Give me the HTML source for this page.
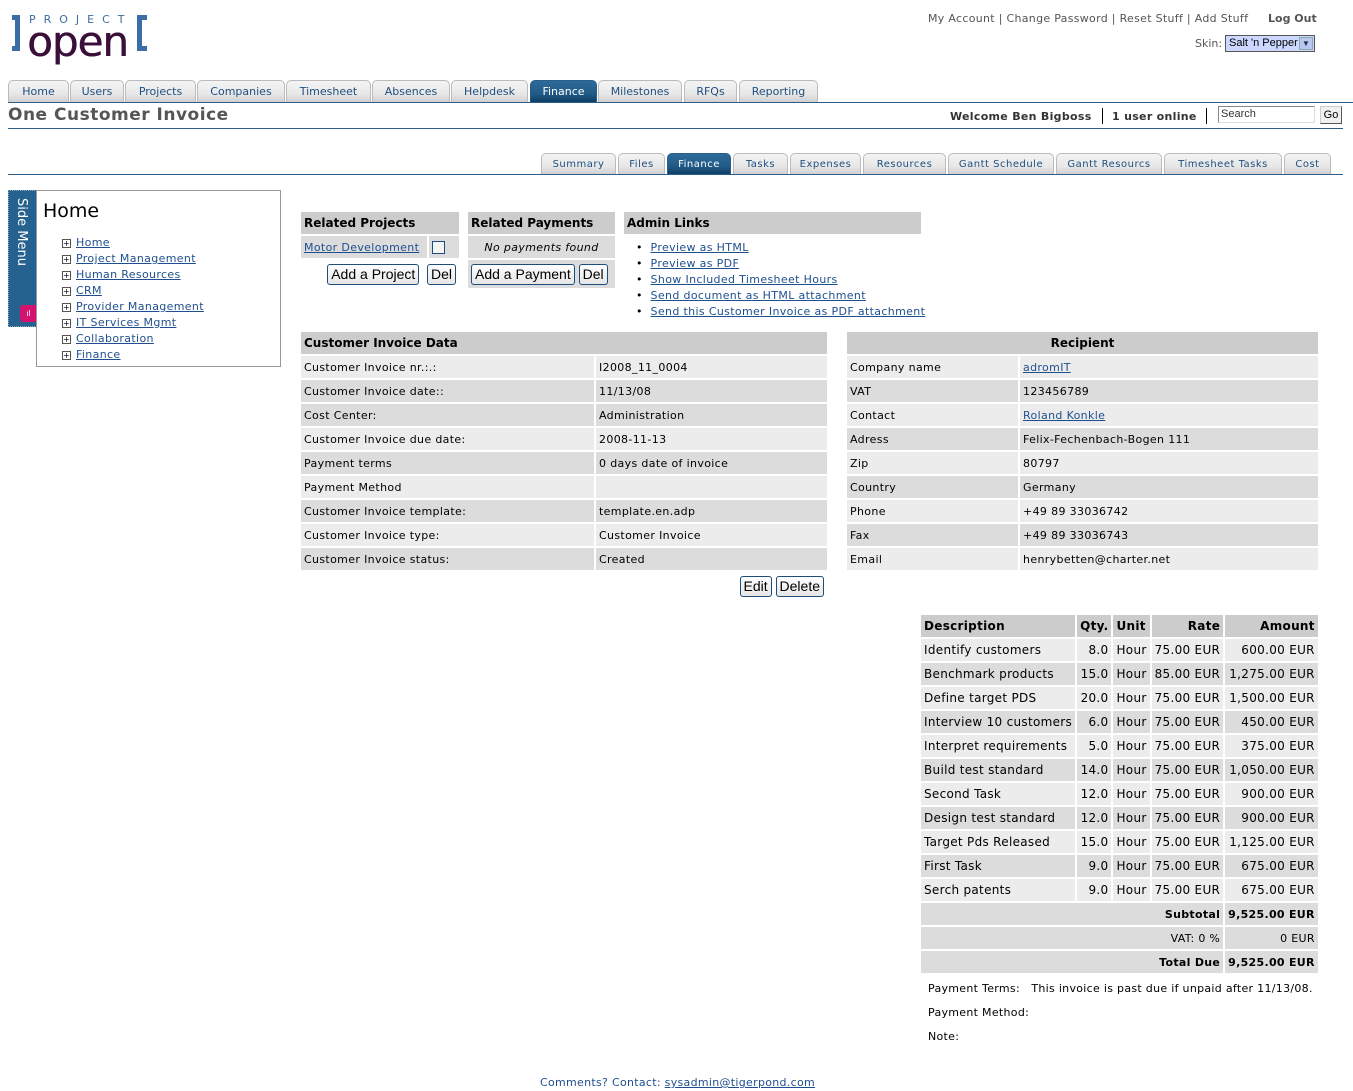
<!DOCTYPE html>
<html><head><meta charset="utf-8"><style>
*{box-sizing:border-box}
body{margin:0;width:1353px;height:1091px;position:relative;font-family:"DejaVu Sans","Liberation Sans",sans-serif;font-size:11px;color:#000;background:#fff;overflow:hidden}
.a{position:absolute}
a{color:#1f4f8f;text-decoration:underline}
.tab{position:absolute;height:22px;border:1px solid #bbb;border-bottom:none;border-radius:5px 5px 0 0;background:linear-gradient(#f4f4f4,#e8e8e8 60%,#d0d0d0);color:#1f4f7f;text-align:center;line-height:22px;font-size:11px}
.tab.on{background:linear-gradient(#2d6b9a,#225b88 60%,#0f3d66);color:#fff;border-color:#2a5d8a}
.stab{position:absolute;height:21px;border:1px solid #bbb;border-bottom:none;border-radius:5px 5px 0 0;background:linear-gradient(#f4f4f4,#e8e8e8 60%,#d0d0d0);color:#1f4f7f;text-align:center;line-height:22px;font-size:10px;letter-spacing:.5px}
.stab.on{background:linear-gradient(#2d6b9a,#225b88 60%,#0f3d66);color:#fff;border-color:#2a5d8a}
table{border-collapse:separate;border-spacing:2px;position:absolute}
td{padding:0 3px;height:22px;font-size:11px;white-space:nowrap;letter-spacing:.35px}
.h td{background:#ccc;font-weight:bold;font-size:12px;height:22px;letter-spacing:0}
.l td{background:#ececec}
.d td{background:#dcdcdc}
.r{text-align:right}
.btn{display:inline-block;border:1px solid #1d4d7a;border-radius:3px;background:linear-gradient(#fff,#e6e6e6);font-family:"Liberation Sans",sans-serif;font-size:14px;padding:0 3px;height:21px;line-height:19px;letter-spacing:0}
.it td{font-size:12px;height:22px;letter-spacing:.3px}
.lk{letter-spacing:.35px}
</style></head><body>
<!-- logo -->
<div class="a" style="left:12px;top:15px;width:8px;height:36px;border:5px solid #3a6ea5;border-left:none;"></div>
<div class="a" style="left:29px;top:13px;font-size:11px;letter-spacing:8px;color:#3a6ea5">PROJECT</div>
<div class="a" style="left:27px;top:17px;font-size:42px;color:#3a0f3a;letter-spacing:-1px;font-family:'DejaVu Sans',sans-serif;text-shadow:0.6px 0 0 #3a0f3a">open</div>
<div class="a" style="left:137px;top:15px;width:10px;height:36px;border:5px solid #3a6ea5;border-right:none;"></div>

<div class="a" style="left:928px;top:12px;color:#555;font-size:11px;letter-spacing:.3px">My Account | Change Password | Reset Stuff | Add Stuff</div>
<div class="a" style="left:1268px;top:12px;color:#555;font-size:11px;font-weight:bold">Log Out</div>
<div class="a" style="left:1195px;top:37px;color:#555;font-size:11px">Skin:</div>
<div class="a" style="left:1225px;top:35px;width:90px;height:17px;border:1px solid #555;background:#ccd8ff;font-family:'Liberation Sans',sans-serif;font-size:11px;padding-left:3px;line-height:15px">Salt 'n Pepper<span style="position:absolute;right:1px;top:1px;width:14px;height:13px;background:#b8c8f0;border:1px solid #8aa;font-size:8px;text-align:center;line-height:12px;color:#234">&#9660;</span></div>

<!-- main tabs -->
<div class="tab" style="left:8px;top:80px;width:61px">Home</div>
<div class="tab" style="left:70px;top:80px;width:54px">Users</div>
<div class="tab" style="left:125px;top:80px;width:71px">Projects</div>
<div class="tab" style="left:197px;top:80px;width:88px">Companies</div>
<div class="tab" style="left:286px;top:80px;width:85px">Timesheet</div>
<div class="tab" style="left:372px;top:80px;width:78px">Absences</div>
<div class="tab" style="left:451px;top:80px;width:77px">Helpdesk</div>
<div class="tab on" style="left:530px;top:80px;width:67px">Finance</div>
<div class="tab" style="left:598px;top:80px;width:84px">Milestones</div>
<div class="tab" style="left:684px;top:80px;width:53px">RFQs</div>
<div class="tab" style="left:739px;top:80px;width:79px">Reporting</div>
<div class="a" style="left:8px;top:102px;width:1345px;height:1px;background:#2a5d8a"></div>
<div class="a" style="left:8px;top:105px;font-size:17px;font-weight:bold;color:#555;letter-spacing:.5px">One Customer Invoice</div>
<div class="a" style="left:950px;top:110px;font-size:11px;font-weight:bold;color:#333;letter-spacing:.3px">Welcome Ben Bigboss</div>
<div class="a" style="left:1102px;top:108px;width:1px;height:16px;background:#000"></div>
<div class="a" style="left:1112px;top:110px;font-size:11px;font-weight:bold;color:#333;letter-spacing:.3px">1 user online</div>
<div class="a" style="left:1206px;top:108px;width:1px;height:16px;background:#000"></div>
<div class="a" style="left:1218px;top:106px;width:97px;height:17px;border:1px solid #888;border-right-color:#ddd;border-bottom-color:#ddd;font-family:'Liberation Sans',sans-serif;font-size:11px;padding-left:2px;line-height:14px;color:#333">Search</div>
<div class="a" style="left:1320px;top:106px;width:22px;height:18px;border:1px solid #ccc;border-right-color:#555;border-bottom-color:#555;background:#f0f0f0;font-family:'Liberation Sans',sans-serif;font-size:11px;text-align:center;line-height:16px">Go</div>
<div class="a" style="left:8px;top:128px;width:1335px;height:1px;background:#2a5d8a"></div>

<!-- sub tabs -->
<div class="stab" style="left:541px;top:153px;width:75px">Summary</div>
<div class="stab" style="left:618px;top:153px;width:47px">Files</div>
<div class="stab on" style="left:667px;top:153px;width:64px">Finance</div>
<div class="stab" style="left:733px;top:153px;width:55px">Tasks</div>
<div class="stab" style="left:790px;top:153px;width:71px">Expenses</div>
<div class="stab" style="left:863px;top:153px;width:83px">Resources</div>
<div class="stab" style="left:948px;top:153px;width:106px">Gantt Schedule</div>
<div class="stab" style="left:1056px;top:153px;width:106px">Gantt Resourcs</div>
<div class="stab" style="left:1164px;top:153px;width:118px">Timesheet Tasks</div>
<div class="stab" style="left:1284px;top:153px;width:47px">Cost</div>
<div class="a" style="left:8px;top:174px;width:1335px;height:1px;background:#2a5d8a"></div>

<!-- side menu -->
<div class="a" style="left:8px;top:190px;width:29px;height:137px;background:#26628f;border:1px dotted #8ab"></div>
<div class="a" style="left:14px;top:198px;color:#fff;font-size:13px;writing-mode:vertical-rl">Side Menu</div>
<div class="a" style="left:20px;top:305px;width:17px;height:17px;background:#d4136f;border-radius:3px 0 0 3px;color:#fff;font-size:8px;line-height:17px;text-align:center">ıl</div>
<div class="a" style="left:36px;top:190px;width:245px;height:177px;border:1px solid #999;background:#fff"></div>
<div class="a" style="left:43px;top:200px;font-size:19px">Home</div>
<div class="a lk" style="left:62px;top:235px;line-height:16px;font-size:11px">
<div><span style="display:inline-block;width:9px;height:9px;border:1px solid #555;font-size:8px;line-height:7px;text-align:center;margin-right:5px">+</span><a>Home</a></div>
<div><span style="display:inline-block;width:9px;height:9px;border:1px solid #555;font-size:8px;line-height:7px;text-align:center;margin-right:5px">+</span><a>Project Management</a></div>
<div><span style="display:inline-block;width:9px;height:9px;border:1px solid #555;font-size:8px;line-height:7px;text-align:center;margin-right:5px">+</span><a>Human Resources</a></div>
<div><span style="display:inline-block;width:9px;height:9px;border:1px solid #555;font-size:8px;line-height:7px;text-align:center;margin-right:5px">+</span><a>CRM</a></div>
<div><span style="display:inline-block;width:9px;height:9px;border:1px solid #555;font-size:8px;line-height:7px;text-align:center;margin-right:5px">+</span><a>Provider Management</a></div>
<div><span style="display:inline-block;width:9px;height:9px;border:1px solid #555;font-size:8px;line-height:7px;text-align:center;margin-right:5px">+</span><a>IT Services Mgmt</a></div>
<div><span style="display:inline-block;width:9px;height:9px;border:1px solid #555;font-size:8px;line-height:7px;text-align:center;margin-right:5px">+</span><a>Collaboration</a></div>
<div><span style="display:inline-block;width:9px;height:9px;border:1px solid #555;font-size:8px;line-height:7px;text-align:center;margin-right:5px">+</span><a>Finance</a></div>
</div>

<!-- related projects -->
<table style="left:299px;top:210px;width:162px">
<tr class="h"><td colspan="2">Related Projects</td></tr>
<tr class="d"><td><a>Motor Development</a></td><td style="width:30px"><span style="display:inline-block;width:13px;height:13px;border:1px solid #1d4d7a;background:#f4f4f4;vertical-align:middle"></span></td></tr>
<tr><td colspan="2" class="r" style="height:28px"><span class="btn">Add a Project</span> &nbsp;<span class="btn">Del</span></td></tr>
</table>
<table style="left:466px;top:210px;width:151px">
<tr class="h"><td>Related Payments</td></tr>
<tr class="d"><td style="text-align:center;font-style:italic">No payments found</td></tr>
<tr class="d"><td style="height:28px"><span class="btn">Add a Payment</span> <span class="btn">Del</span></td></tr>
</table>
<table style="left:622px;top:210px;width:301px">
<tr class="h"><td>Admin Links</td></tr>
</table>
<div class="a lk" style="left:636px;top:240px;line-height:16px">
<div>&bull;&nbsp; <a>Preview as HTML</a></div>
<div>&bull;&nbsp; <a>Preview as PDF</a></div>
<div>&bull;&nbsp; <a>Show Included Timesheet Hours</a></div>
<div>&bull;&nbsp; <a>Send document as HTML attachment</a></div>
<div>&bull;&nbsp; <a>Send this Customer Invoice as PDF attachment</a></div>
</div>

<!-- invoice data -->
<table style="left:299px;top:330px;width:530px">
<tr class="h"><td colspan="2">Customer Invoice Data</td></tr>
<tr class="l"><td style="width:293px">Customer Invoice nr.:.:</td><td>I2008_11_0004</td></tr>
<tr class="d"><td>Customer Invoice date::</td><td>11/13/08</td></tr>
<tr class="d"><td>Cost Center:</td><td>Administration</td></tr>
<tr class="l"><td>Customer Invoice due date:</td><td>2008-11-13</td></tr>
<tr class="d"><td>Payment terms</td><td>0 days date of invoice</td></tr>
<tr class="l"><td>Payment Method</td><td></td></tr>
<tr class="d"><td>Customer Invoice template:</td><td>template.en.adp</td></tr>
<tr class="l"><td>Customer Invoice type:</td><td>Customer Invoice</td></tr>
<tr class="d"><td>Customer Invoice status:</td><td>Created</td></tr>
<tr><td colspan="2" class="r" style="height:28px"><span class="btn">Edit</span> <span class="btn">Delete</span></td></tr>
</table>

<table style="left:845px;top:330px;width:475px">
<tr class="h"><td colspan="2" style="text-align:center">Recipient</td></tr>
<tr class="l"><td style="width:171px">Company name</td><td><a>adromIT</a></td></tr>
<tr class="d"><td>VAT</td><td>123456789</td></tr>
<tr class="l"><td>Contact</td><td><a>Roland Konkle</a></td></tr>
<tr class="d"><td>Adress</td><td>Felix-Fechenbach-Bogen 111</td></tr>
<tr class="l"><td>Zip</td><td>80797</td></tr>
<tr class="d"><td>Country</td><td>Germany</td></tr>
<tr class="l"><td>Phone</td><td>+49 89 33036742</td></tr>
<tr class="d"><td>Fax</td><td>+49 89 33036743</td></tr>
<tr class="l"><td>Email</td><td>henrybetten@charter.net</td></tr>
</table>

<!-- items -->
<table class="it" style="left:919px;top:613px;width:399px">
<tr class="h"><td style="width:154px">Description</td><td class="r">Qty.</td><td>Unit</td><td class="r">Rate</td><td class="r">Amount</td></tr>
<tr class="l"><td>Identify customers</td><td class="r">8.0</td><td>Hour</td><td class="r">75.00 EUR</td><td class="r">600.00 EUR</td></tr>
<tr class="d"><td>Benchmark products</td><td class="r">15.0</td><td>Hour</td><td class="r">85.00 EUR</td><td class="r">1,275.00 EUR</td></tr>
<tr class="l"><td>Define target PDS</td><td class="r">20.0</td><td>Hour</td><td class="r">75.00 EUR</td><td class="r">1,500.00 EUR</td></tr>
<tr class="d"><td>Interview 10 customers</td><td class="r">6.0</td><td>Hour</td><td class="r">75.00 EUR</td><td class="r">450.00 EUR</td></tr>
<tr class="l"><td>Interpret requirements</td><td class="r">5.0</td><td>Hour</td><td class="r">75.00 EUR</td><td class="r">375.00 EUR</td></tr>
<tr class="d"><td>Build test standard</td><td class="r">14.0</td><td>Hour</td><td class="r">75.00 EUR</td><td class="r">1,050.00 EUR</td></tr>
<tr class="l"><td>Second Task</td><td class="r">12.0</td><td>Hour</td><td class="r">75.00 EUR</td><td class="r">900.00 EUR</td></tr>
<tr class="d"><td>Design test standard</td><td class="r">12.0</td><td>Hour</td><td class="r">75.00 EUR</td><td class="r">900.00 EUR</td></tr>
<tr class="l"><td>Target Pds Released</td><td class="r">15.0</td><td>Hour</td><td class="r">75.00 EUR</td><td class="r">1,125.00 EUR</td></tr>
<tr class="d"><td>First Task</td><td class="r">9.0</td><td>Hour</td><td class="r">75.00 EUR</td><td class="r">675.00 EUR</td></tr>
<tr class="l"><td>Serch patents</td><td class="r">9.0</td><td>Hour</td><td class="r">75.00 EUR</td><td class="r">675.00 EUR</td></tr>
<tr class="d"><td colspan="4" class="r" style="font-size:11px"><b>Subtotal</b></td><td class="r" style="font-size:11px"><b>9,525.00 EUR</b></td></tr>
<tr class="d"><td colspan="4" class="r" style="font-size:11px">VAT: 0 %</td><td class="r" style="font-size:11px">0 EUR</td></tr>
<tr class="d"><td colspan="4" class="r" style="font-size:11px"><b>Total Due</b></td><td class="r" style="font-size:11px"><b>9,525.00 EUR</b></td></tr>
</table>
<div class="a" style="left:928px;top:977px;font-size:11px;line-height:24px;letter-spacing:.3px">
<div>Payment Terms:&nbsp;&nbsp; This invoice is past due if unpaid after 11/13/08.</div>
<div>Payment Method:</div>
<div>Note:</div>
</div>

<div class="a" style="left:540px;top:1076px;font-size:11px;color:#1f4f8f;letter-spacing:.3px">Comments? Contact: <a>sysadmin@tigerpond.com</a></div>
</body></html>
